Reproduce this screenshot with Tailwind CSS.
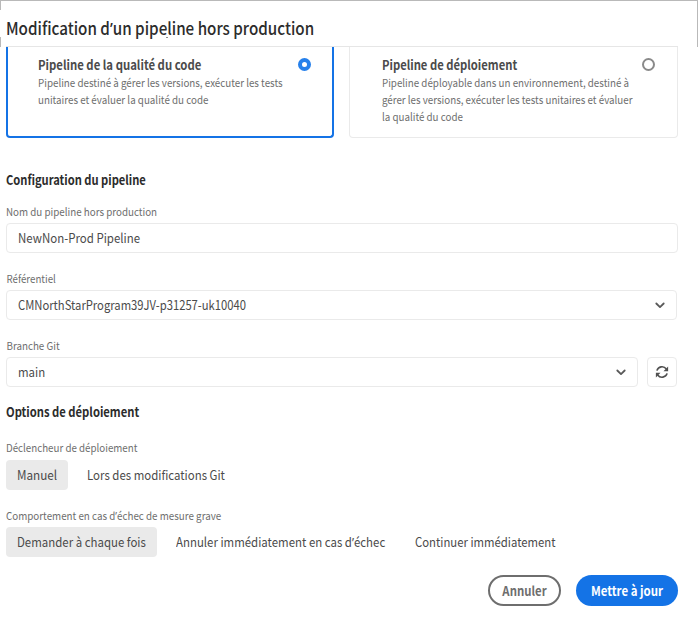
<!DOCTYPE html>
<html lang="fr">
<head>
<meta charset="utf-8">
<title>Modification d’un pipeline hors production</title>
<script src="https://cdn.jsdelivr.net/npm/@tailwindcss/browser@4"></script>
</head>
<body class="w-[698px] h-[620px] overflow-hidden bg-white font-['Noto_Sans_CJK_SC','Noto_Sans',sans-serif] text-[13px] text-[#4b4b4b] whitespace-nowrap">
<div class="relative w-[698px] h-[620px]">
  <span class="absolute left-0 top-0 w-px h-[10px] bg-[#b9b9b9]"></span>
  <span class="absolute left-0 top-[37px] w-px h-[10px] bg-[#b9b9b9]"></span>
  <span class="absolute right-0 top-0 w-px h-[47px] bg-[#b9b9b9]"></span>
  <span class="absolute left-[166px] top-[37px] w-[2px] h-px bg-[#8a8a8a]"></span>
  <header class="h-[47px] border-t border-[#b9b9b9] pl-[6px] pt-[14px] pr-5">
    <h1 class="h-[31px] leading-[26px] text-[17px] font-medium text-[#2c2c2c] origin-left scale-x-[.894]">Modification d<span class="font-['Noto_Sans'] leading-none">’</span>un pipeline hors production</h1>
    <div class="h-px bg-[#e6e6e6]"></div>
  </header>
  <main class="pl-[6px]">
    <section class="flex gap-[15px]">
      <div class="w-[328px] h-[91px] border-2 border-t-0 border-[#1473e6] rounded-b-[4px] pl-[30px] pr-[21px] flex justify-between">
        <div class="w-[250px] pt-[9px]">
          <h2 class="leading-[18px] text-[13px] font-bold origin-left scale-x-[.872]">Pipeline de la qualité du code</h2>
          <p class="leading-[17px] text-[11px] text-[#6e6e6e] origin-left scale-x-[.89]">Pipeline destiné à gérer les versions, exécuter les tests<br>unitaires et évaluer la qualité du code</p>
        </div>
        <span class="mt-[11px] size-[13px] shrink-0 rounded-full border-[4.5px] border-[#2680eb]"></span>
      </div>
      <div class="w-[329px] h-[91px] border border-t-0 border-[#eaeaea] rounded-b-[4px] pl-[32px] pr-[22px] flex justify-between">
        <div class="w-[250px] pt-[9px]">
          <h2 class="leading-[18px] text-[13px] font-bold origin-left scale-x-[.865]">Pipeline de déploiement</h2>
          <p class="leading-[17px] text-[11px] text-[#6e6e6e] origin-left scale-x-[.888]">Pipeline déployable dans un environnement, destiné à<br>gérer les versions, exécuter les tests unitaires et évaluer<br>la qualité du code</p>
        </div>
        <span class="mt-[11px] size-[13px] shrink-0 rounded-full border-2 border-[#8a8a8a]"></span>
      </div>
    </section>

    <h2 class="mt-[33px] leading-[18px] text-[13px] font-bold text-[#2c2c2c] origin-left scale-x-[.857]">Configuration du pipeline</h2>

    <label class="block mt-[14px] h-[20px] leading-[16px] text-[11px] text-[#6e6e6e] origin-left scale-x-[.89]">Nom du pipeline hors production</label>
    <div class="w-[672px] h-[30px] border border-[#eaeaea] rounded-[4px] pl-[11px] leading-[28px]"><div class="origin-left scale-x-[.883]">NewNon-Prod Pipeline</div></div>

    <label class="block mt-[17px] h-[20px] pl-[0.5px] leading-[16px] text-[11px] text-[#6e6e6e] origin-left scale-x-[.885]">Référentiel</label>
    <div class="w-[671px] h-[30px] border border-[#eaeaea] rounded-[4px] pl-[11px] pr-[11px] leading-[28px] flex items-center justify-between">
      <span class="origin-left scale-x-[.865]">CMNorthStarProgram39JV-p31257-uk10040</span>
      <svg class="w-[10px] h-[7px]" viewBox="0 0 10 7" fill="none" stroke="#5a5a5a" stroke-width="1.8" stroke-linecap="round" stroke-linejoin="round"><path d="M1.3 1.5 5 5.1 8.7 1.5"/></svg>
    </div>

    <label class="block mt-[17px] h-[20px] pl-[0.5px] leading-[16px] text-[11px] text-[#6e6e6e] origin-left scale-x-[.89]">Branche Git</label>
    <div class="flex gap-[9px]">
      <div class="w-[632px] h-[30px] border border-[#eaeaea] rounded-[4px] pl-[11px] pr-[11px] leading-[28px] flex items-center justify-between">
        <span class="origin-left scale-x-[.88]">main</span>
        <svg class="w-[10px] h-[7px]" viewBox="0 0 10 7" fill="none" stroke="#5a5a5a" stroke-width="1.8" stroke-linecap="round" stroke-linejoin="round"><path d="M1.3 1.5 5 5.1 8.7 1.5"/></svg>
      </div>
      <div class="size-[30px] border border-[#eaeaea] rounded-[4px] flex items-center justify-center">
        <svg class="size-[14px]" viewBox="0 0 14 14" fill="none" stroke="#505050" stroke-width="1.6"><path d="M1.9 5.6A5.3 5.3 0 0 1 11.3 4"/><path d="M12.1 8.4A5.3 5.3 0 0 1 2.7 10"/><path d="M13.1 1.6V6.2H8.5Z" fill="#505050" stroke="none"/><path d="M.9 12.4V7.8H5.5Z" fill="#505050" stroke="none"/></svg>
      </div>
    </div>

    <h2 class="mt-[16px] leading-[18px] text-[13px] font-bold text-[#2c2c2c] origin-left scale-x-[.864]">Options de déploiement</h2>

    <div class="mt-[18px] h-[21px] leading-[16px] text-[11px] text-[#6e6e6e] origin-left scale-x-[.887]">Déclencheur de déploiement</div>
    <div class="flex leading-[30px]">
      <div class="w-[62px] h-[30px] rounded-[4px] bg-[#eaeaea] pl-[11px]"><div class="origin-left scale-x-[.9]">Manuel</div></div>
      <div class="ml-[19px] origin-left scale-x-[.88]">Lors des modifications Git</div>
    </div>

    <div class="mt-[17px] h-[20px] leading-[16px] text-[11px] text-[#6e6e6e] origin-left scale-x-[.891]">Comportement en cas d<span class="font-['Noto_Sans'] leading-none">’</span>échec de mesure grave</div>
    <div class="flex leading-[30px]">
      <div class="w-[151px] h-[30px] rounded-[4px] bg-[#eaeaea] pl-[11px]"><div class="origin-left scale-x-[.88]">Demander à chaque fois</div></div>
      <div class="ml-[19px] w-[239px] origin-left scale-x-[.88]">Annuler immédiatement en cas d<span class="font-['Noto_Sans'] leading-none">’</span>échec</div>
      <div class="origin-left scale-x-[.872]">Continuer immédiatement</div>
    </div>

    <footer class="mt-[18px] flex justify-end gap-[15px] pr-5 font-bold">
      <button class="w-[73px] h-[31px] rounded-full border-2 border-[#6e6e6e] text-[#6e6e6e] leading-[28px]"><div class="scale-x-[.875]">Annuler</div></button>
      <button class="w-[102px] h-[31px] rounded-full bg-[#1473e6] text-white leading-[32px]"><div class="scale-x-[.88]">Mettre à jour</div></button>
    </footer>
  </main>
</div>
</body>
</html>
